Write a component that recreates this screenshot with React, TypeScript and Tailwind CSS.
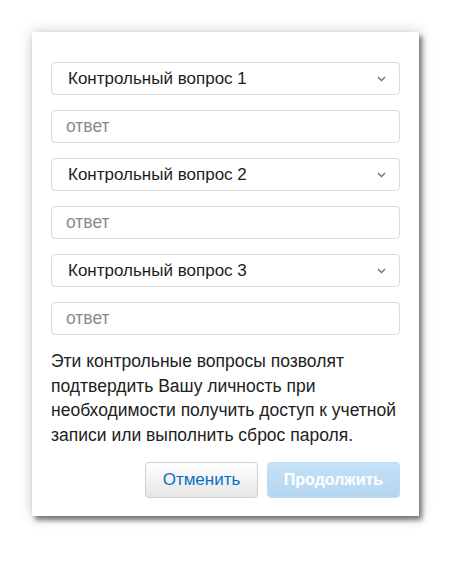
import React from "react";

const font = { fontFamily: '"Liberation Sans", Arial, sans-serif' };

function Chevron() {
  return (
    <svg width="9" height="6" viewBox="0 0 9 6" className="shrink-0">
      <path d="M1 1 L4.5 4.5 L8 1" fill="none" stroke="#6b6b7b" strokeWidth="1.3" />
    </svg>
  );
}

function Select({ label }: { label: string }) {
  return (
    <div className="flex h-[33px] items-center justify-between rounded-[4px] border border-[#d9d9d9] bg-white pl-[16px] pr-[13px]">
      <span className="text-[17px] text-[#1d1d1f]">{label}</span>
      <Chevron />
    </div>
  );
}

function Answer() {
  return (
    <div className="flex h-[33px] items-center rounded-[4px] border border-[#d9d9d9] bg-white pl-[14px]">
      <span className="text-[17.5px] text-[#8a8a8a]">ответ</span>
    </div>
  );
}

export default function App() {
  return (
    <div className="min-h-[567px] bg-white pl-[32px] pt-[32px]" style={font}>
      <div className="flex w-[387px] flex-col bg-white px-[19px] pb-[18px] pt-[30px] shadow-[0_0_14px_rgba(0,0,0,0.2),3px_4px_5px_rgba(0,0,0,0.5)]">
        <div className="flex flex-col gap-[15px]">
          <Select label="Контрольный вопрос 1" />
          <Answer />
          <Select label="Контрольный вопрос 2" />
          <Answer />
          <Select label="Контрольный вопрос 3" />
          <Answer />
        </div>
        <p className="mt-[14px] text-[17.5px] leading-[24.5px] text-[#222]">
          Эти контрольные вопросы позволят подтвердить Вашу личность при необходимости получить доступ к учетной записи или выполнить сброс пароля.
        </p>
        <div className="mt-[15px] flex justify-end gap-[9px]">
          <button className="h-[36px] w-[113px] rounded-[4px] border border-[#cfcfcf] bg-gradient-to-b from-[#ffffff] to-[#e6e6e6] text-[17px] text-[#0a6fc2]">
            Отменить
          </button>
          <button className="h-[36px] w-[133px] rounded-[4px] border border-[#bcdcf3] bg-gradient-to-b from-[#c4e2f8] to-[#b5d6f0] text-[16px] font-bold text-white">
            Продолжить
          </button>
        </div>
      </div>
    </div>
  );
}
